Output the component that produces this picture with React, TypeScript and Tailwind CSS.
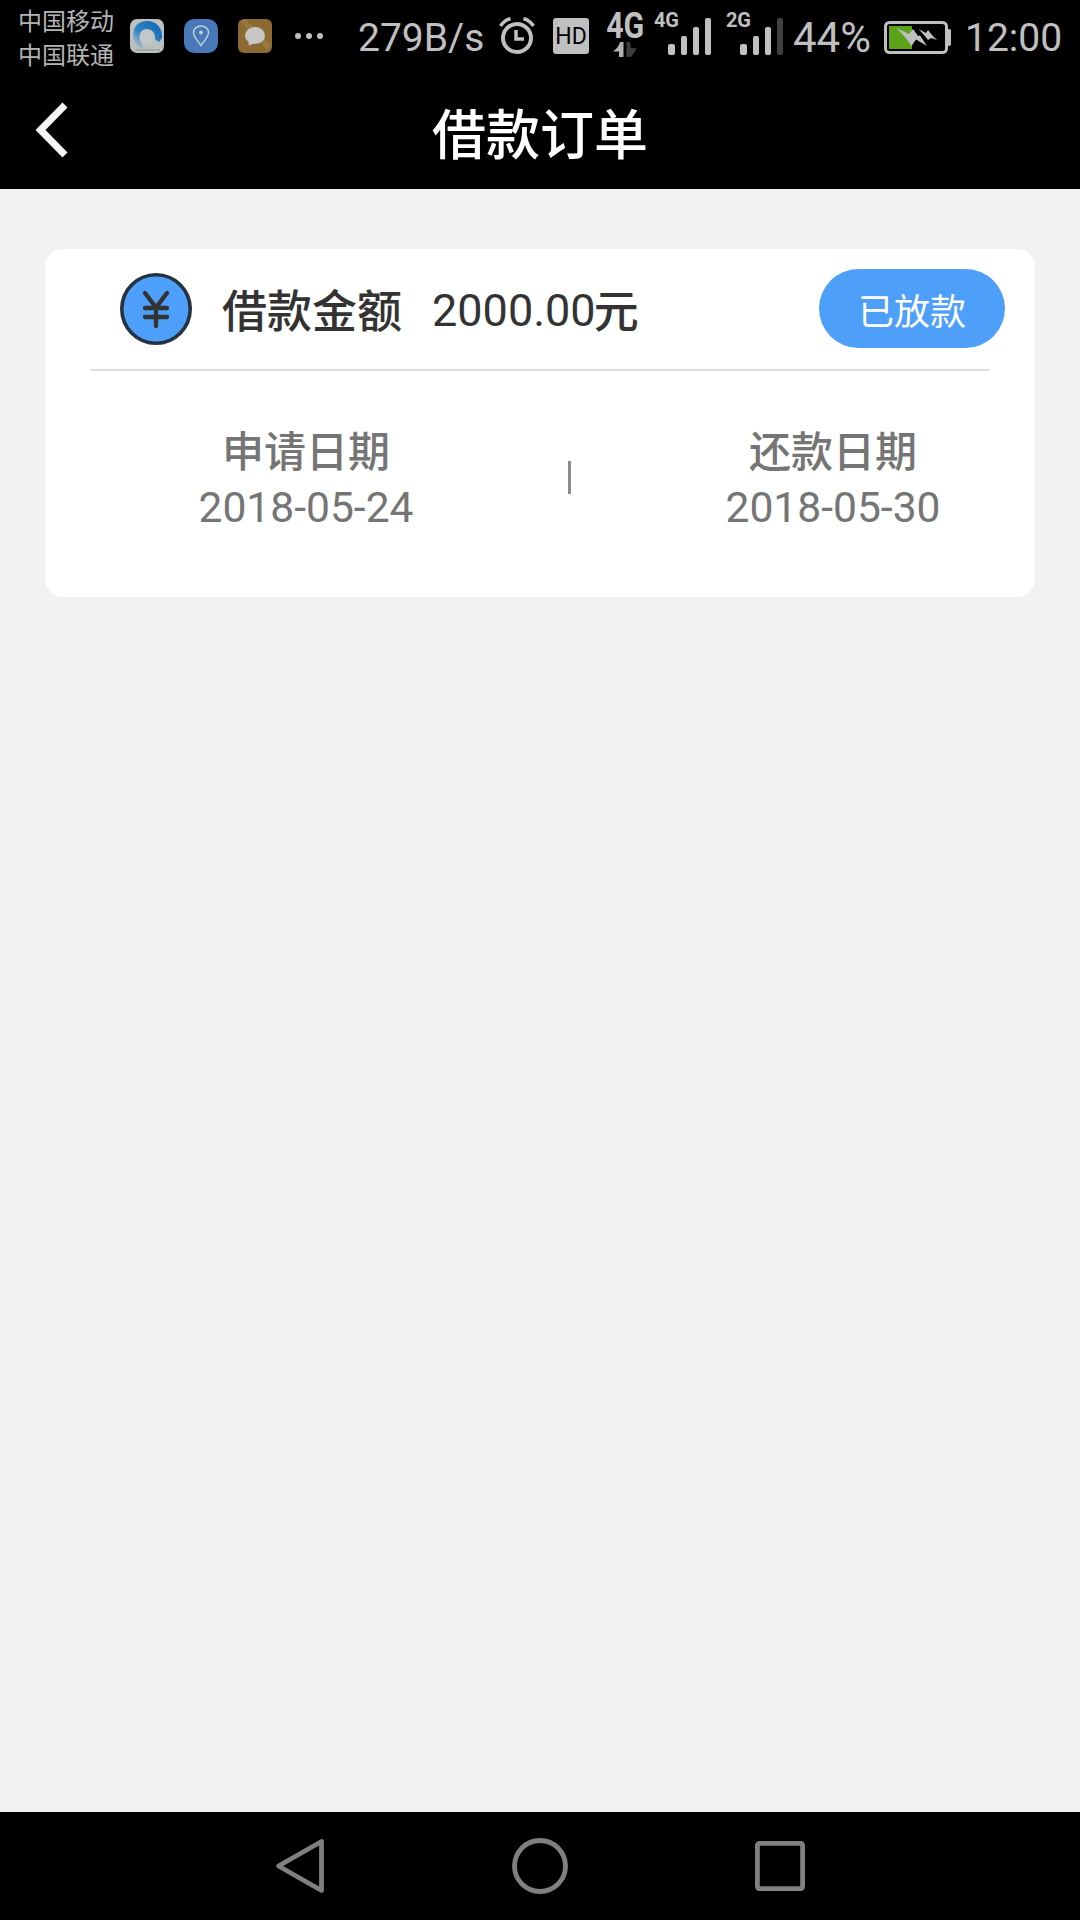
import React from 'react';

// ── Status bar icons ──────────────────────────────────────────────────────────

const BrowserIcon = () => (
  <svg width="34" height="34" viewBox="0 0 34 34" className="shrink-0">
    <defs>
      <linearGradient id="swirl" x1="1" y1="0" x2="0" y2="1">
        <stop offset="0" stopColor="#1260b0" />
        <stop offset="0.6" stopColor="#2c88c8" />
        <stop offset="0.95" stopColor="#bcc4c8" />
      </linearGradient>
    </defs>
    <rect width="34" height="34" rx="7" fill="#bcc0c0" />
    <path d="M10 29C-1 22 1 2 17 2C27 2 33 10 32 19L29 23L25 20C25.500 14 22 10 17 10C9 10 7 19 13 28Z" fill="url(#swirl)" />
    <circle cx="17" cy="18" r="7.500" fill="#c4c7c8" />
    <path d="M5 31H30" stroke="#8f9496" strokeWidth="1" />
  </svg>
);

const LocationIcon = () => (
  <svg width="34" height="34" viewBox="0 0 34 34" className="shrink-0">
    <rect width="34" height="34" rx="10" fill="#4878b8" />
    <path d="M17 26.5C14 22 9.500 18 9.500 13.500A7.500 6.500 0 0 1 24.500 13.500C24.500 18 20 22 17 26.500Z" fill="none" stroke="#c3cfdd" strokeWidth="1.400" />
    <circle cx="17" cy="13.500" r="1.900" fill="#c3cfdd" />
  </svg>
);

const MessageIcon = () => (
  <svg width="34" height="34" viewBox="0 0 34 34" className="shrink-0">
    <rect width="34" height="34" rx="6" fill="#8c6a32" />
    <path d="M2 2L7 0L33 26L30 32Z" fill="#977642" />
    <ellipse cx="17" cy="16.500" rx="10" ry="8.500" fill="#c6c6c4" />
    <path d="M11 21L10.500 26.500L18 24Z" fill="#c6c6c4" />
  </svg>
);

const AlarmIcon = () => (
  <svg width="36" height="37" viewBox="0 0 36 37" fill="none" stroke="#c0c0c0" className="shrink-0">
    <circle cx="18" cy="21" r="14" strokeWidth="4" />
    <path d="M17 13V22H25" strokeWidth="3.500" />
    <path d="M1.500 9Q5 3.500 11.500 1.500M24.500 1.500Q31 3.500 34.500 9" strokeWidth="3.500" />
  </svg>
);

const DataArrows = () => (
  <svg width="24" height="15" viewBox="0 0 24 15">
    <path d="M10.500 0V15H6V9.500H0Q6 5 7 0Z" fill="#b0b0b0" />
    <path d="M13.500 0H17L18 6L24 6.500L18 15H13.500Z" fill="#3c3c3c" />
  </svg>
);

const SignalIcon = ({ last }: { last: string }) => (
  <svg width="43" height="37" viewBox="0 0 43 37" fill="#c0c0c0">
    <rect x="0" y="26" width="7" height="11" rx="2" />
    <rect x="13" y="18" width="6" height="19" rx="2" />
    <rect x="25" y="9" width="6" height="28" rx="2" />
    <rect x="37" y="0" width="6" height="37" rx="2" fill={last} />
  </svg>
);

const BatteryIcon = () => (
  <svg width="67" height="33" viewBox="0 0 67 33" className="shrink-0">
    <rect x="1.500" y="1.500" width="61" height="30" rx="4" fill="none" stroke="#c0c0c0" strokeWidth="3" />
    <path d="M63 8H65Q67 8 67 10V23Q67 25 65 25H63Z" fill="#c0c0c0" />
    <rect x="5" y="5" width="23" height="23" fill="#5ca31a" />
    <path d="M12.500 7L25 13L29 8L34 15L36 14.500L43 25L32 18.500L27.500 25L21 16Z" fill="#c0c0c0" />
    <path d="M34.500 8L42 12L44 9L48 14L53 19L47 17L44 19L40 14Z" fill="#c0c0c0" />
  </svg>
);

interface NetworkSignalProps {
  label: string;
  last: string;
}

const NetworkSignal: React.FC<NetworkSignalProps> = ({ label, last }) => (
  <div className="flex w-[57px] shrink-0 items-start">
    <span className="mt-[10px] w-[14px] text-[20px] leading-5 font-bold tracking-[-0.3px]">{label}</span>
    <div className="mt-[18px]">
      <SignalIcon last={last} />
    </div>
  </div>
);

const StatusBar = () => (
  <div className="flex h-[72px] items-start bg-black pl-[18px] whitespace-nowrap text-[#c0c0c0]">
    <div className="mt-[5px] w-[96px] shrink-0 text-[24px] leading-[34px] text-[#b4b4b4]">
      <div>中国移动</div>
      <div>中国联通</div>
    </div>
    <div className="mt-[19px] ml-4 flex gap-5">
      <BrowserIcon />
      <LocationIcon />
      <MessageIcon />
    </div>
    <div className="mt-[33px] ml-[23px] flex gap-[5px]">
      <i className="size-[6px] rounded-full bg-[#c0c0c0]" />
      <i className="size-[6px] rounded-full bg-[#c0c0c0]" />
      <i className="size-[6px] rounded-full bg-[#c0c0c0]" />
    </div>
    <span className="mt-[18px] ml-[35px] w-[141px] shrink-0 text-[39px] leading-10">279B/s</span>
    <div className="mt-[17px]">
      <AlarmIcon />
    </div>
    <div className="mt-[18px] ml-[18px] flex size-9 shrink-0 items-center justify-center rounded-[3px] bg-[#c0c0c0] text-[23px] leading-none text-black">
      HD
    </div>
    <div className="mt-[9px] ml-[16px] flex w-[40px] shrink-0 flex-col items-center">
      <span className="origin-center scale-x-[0.82] text-[37px] leading-[33px] font-bold">4G</span>
      <DataArrows />
    </div>
    <div className="ml-[9px] flex gap-[15px]">
      <NetworkSignal label="4G" last="#c0c0c0" />
      <NetworkSignal label="2G" last="#404040" />
    </div>
    <span className="mt-[18px] ml-[10px] w-[91px] shrink-0 text-[42px] leading-10">44%</span>
    <div className="mt-[21px]">
      <BatteryIcon />
    </div>
    <span className="mt-[18px] ml-[14px] text-[39px] leading-10">12:00</span>
  </div>
);

// ── Page header ───────────────────────────────────────────────────────────────

const TitleBar = () => (
  <header className="flex h-[117px] items-start bg-black px-9 text-white">
    <svg width="32" height="56" viewBox="0 0 32 56" className="mt-[30px]">
      <path d="M29 3L4.500 28L29 53" fill="none" stroke="#f4f4f4" strokeWidth="7" />
    </svg>
    <h1 className="mt-[35px] mr-8 flex-1 text-center text-[54px] leading-[60px] font-medium">借款订单</h1>
  </header>
);

// ── Order card ────────────────────────────────────────────────────────────────

const YuanIcon = () => (
  <svg width="72" height="72" viewBox="0 0 72 72" className="shrink-0">
    <circle cx="36" cy="36" r="34.200" fill="#4d9ffa" stroke="#26323e" strokeWidth="3.600" />
    <path d="M25 20L36 34.500L47 20M36 34.500V53M25 35H47M25 44H47" fill="none" stroke="#333" strokeWidth="4.300" strokeLinecap="round" />
  </svg>
);

interface DateColumnProps {
  label: string;
  date: string;
}

const DateColumn: React.FC<DateColumnProps> = ({ label, date }) => (
  <div className="flex w-[220px] flex-col items-center whitespace-nowrap text-[#757575]">
    <span className="text-[42px] leading-[56px] font-medium">{label}</span>
    <span className="text-[42.600px] leading-[52px]">{date}</span>
  </div>
);

const OrderCard = () => (
  <section className="mx-[45px] h-[348px] rounded-[18px] bg-white">
    <div className="mx-[45px] flex h-[122px] items-start border-b-2 border-[#dcdcdc] pl-[30px] text-[45px] leading-[60px] text-[#333]">
      <div className="mt-6">
        <YuanIcon />
      </div>
      <span className="mt-[34px] ml-[30px] font-medium">借款金额</span>
      <span className="mt-8 ml-[30px]">2000.00</span>
      <span className="mt-[34px] ml-[-2px] font-medium">元</span>
      <span className="-mr-[15px] mt-5 ml-auto flex h-[79px] w-[186px] items-center justify-center rounded-full bg-[#4d9ffa] pt-2 text-[36px] text-white">
        已放款
      </span>
    </div>
    <div className="flex items-start justify-between pt-[54px] pr-[92px] pl-[151px]">
      <DateColumn label="申请日期" date="2018-05-24" />
      <i className="mt-9 h-[33px] w-[3px] bg-[#8c8c8c]" />
      <DateColumn label="还款日期" date="2018-05-30" />
    </div>
  </section>
);

// ── System navigation ─────────────────────────────────────────────────────────

const NavBar = () => (
  <nav className="flex h-[108px] items-start bg-black pl-[275px]">
    <svg width="530" height="108" viewBox="0 0 530 108" fill="none" stroke="#808080" strokeWidth="4.800" strokeLinejoin="round">
      <path d="M3.500 54L46.500 29.500V78.500Z" />
      <circle cx="265" cy="54" r="25.500" />
      <rect x="482.400" y="31.400" width="45.200" height="45.200" rx="2" />
    </svg>
  </nav>
);

export default function App() {
  return (
    <div className="flex h-[1920px] w-[1080px] flex-col overflow-hidden bg-[#f1f1f1] font-[Roboto,'Noto_Sans_CJK_SC',sans-serif]">
      <StatusBar />
      <TitleBar />
      <main className="flex-1 pt-[60px]">
        <OrderCard />
      </main>
      <NavBar />
    </div>
  );
}
